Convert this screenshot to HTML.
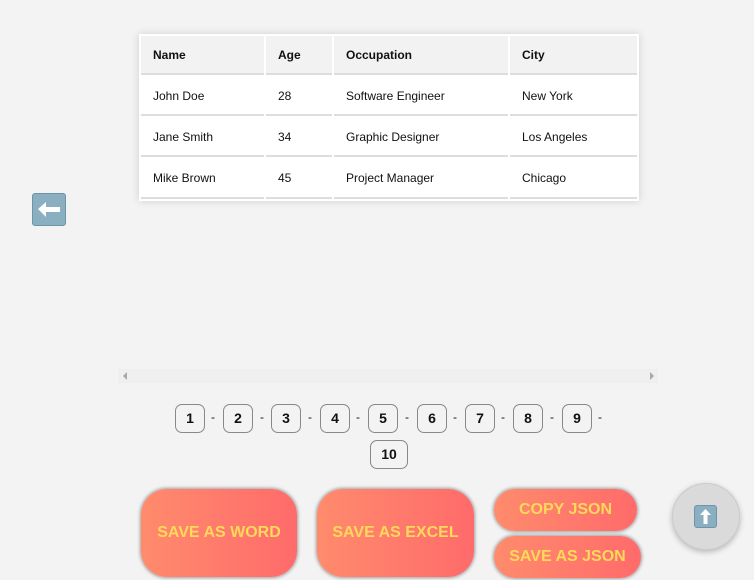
<!DOCTYPE html>
<html><head><meta charset="utf-8"><style>
html,body{margin:0;padding:0;width:754px;height:580px;overflow:hidden;background:#f3f3f3;font-family:"Liberation Sans",Arial,sans-serif;}
.abs{position:absolute}
table{position:absolute;left:139px;top:34px;width:500px;border-spacing:2px;background:#fff;box-shadow:0 0 8px rgba(0,0,0,0.15);font-size:12px;color:#111}
td,th{text-align:left;padding:0 0 0 12px;border-bottom:2px solid #ddd;height:37px;background:#fff;font-weight:normal}
th{background:#f2f2f2;font-weight:bold;height:37px}
tr:last-child td{height:38px}
.pg{position:absolute;top:404px;width:28px;height:27px;border:1px solid #888;border-radius:7px;text-align:center;line-height:27px;font-weight:bold;font-size:14px;color:#111;background:#f3f3f3}
.dash{position:absolute;top:410px;font-size:12px;color:#111}
.btn{position:absolute;background:linear-gradient(90deg,#ff8b6c,#ff6b6b);color:#ffd95a;font-weight:bold;font-size:16px;text-align:center;box-shadow:0 0 3px 1px rgba(0,0,0,0.35);display:flex;align-items:center;justify-content:center}
.key{position:absolute;background:#8aafc0;border-radius:3px;border:1px solid #6d95a8}
</style></head><body>
<table>
<tr><th style="width:111px">Name</th><th style="width:54px">Age</th><th style="width:162px">Occupation</th><th>City</th></tr>
<tr><td>John Doe</td><td>28</td><td>Software Engineer</td><td>New York</td></tr>
<tr><td>Jane Smith</td><td>34</td><td>Graphic Designer</td><td>Los Angeles</td></tr>
<tr><td>Mike Brown</td><td>45</td><td>Project Manager</td><td>Chicago</td></tr>
</table>

<div class="key" style="left:32px;top:193px;width:32px;height:31px">
<svg width="32" height="31" viewBox="0 0 32 31"><path d="M5 15 L13 8 L13 13 L27 13 L27 18 L13 18 L13 23 Z" fill="#fff"/></svg></div>

<div class="abs" style="left:118px;top:369px;width:540px;height:14px;background:#efefef"></div>
<div class="abs" style="left:123px;top:372px;width:0;height:0;border-top:4px solid transparent;border-bottom:4px solid transparent;border-right:4px solid #aaa"></div>
<div class="abs" style="left:650px;top:372px;width:0;height:0;border-top:4px solid transparent;border-bottom:4px solid transparent;border-left:4px solid #aaa"></div>

<div class="pg" style="left:175px">1</div><span class="dash" style="left:211px">-</span>
<div class="pg" style="left:223px">2</div><span class="dash" style="left:260px">-</span>
<div class="pg" style="left:271px">3</div><span class="dash" style="left:308px">-</span>
<div class="pg" style="left:320px">4</div><span class="dash" style="left:356px">-</span>
<div class="pg" style="left:368px">5</div><span class="dash" style="left:405px">-</span>
<div class="pg" style="left:417px">6</div><span class="dash" style="left:453px">-</span>
<div class="pg" style="left:465px">7</div><span class="dash" style="left:501px">-</span>
<div class="pg" style="left:513px">8</div><span class="dash" style="left:550px">-</span>
<div class="pg" style="left:562px">9</div><span class="dash" style="left:598px">-</span>
<div class="pg" style="left:370px;top:440px;width:36px">10</div>

<div class="btn" style="left:141px;top:489px;width:156px;height:88px;border-radius:26px">SAVE AS WORD</div>
<div class="btn" style="left:317px;top:489px;width:157px;height:88px;border-radius:26px">SAVE AS EXCEL</div>
<div class="btn" style="left:494px;top:489px;width:143px;height:42px;border-radius:21px">COPY JSON</div>
<div class="btn" style="left:494px;top:536px;width:147px;height:42px;border-radius:21px">SAVE AS JSON</div>

<div class="abs" style="left:672px;top:483px;width:66px;height:65px;border-radius:50%;background:#dadada;border:1px solid #ccc;box-shadow:0 2px 6px rgba(0,0,0,0.25)"></div>
<div class="key" style="left:694px;top:505px;width:21px;height:21px">
<svg width="21" height="21" viewBox="0 0 21 21"><path d="M10.5 3 L16 9 L12.5 9 L12.5 18 L8.5 18 L8.5 9 L5 9 Z" fill="#fff"/></svg></div>
</body></html>
